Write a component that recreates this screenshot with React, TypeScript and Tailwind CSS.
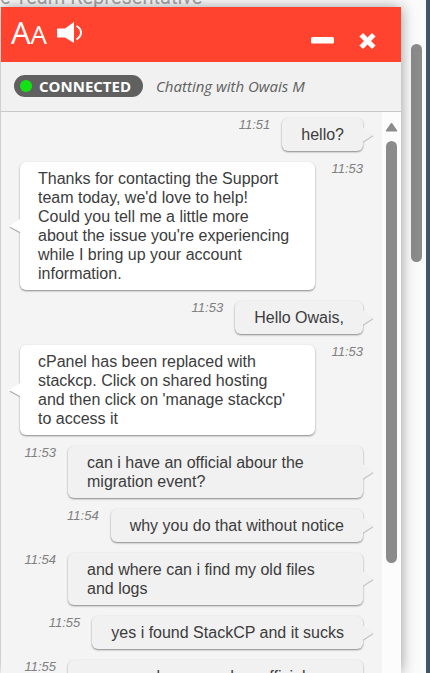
import React from "react";

type Message = { from: "agent" | "visitor"; time: string; text: string };

const messages: Message[] = [
  { from: "visitor", time: "11:51", text: "hello?" },
  {
    from: "agent",
    time: "11:53",
    text: "Thanks for contacting the Support team today, we'd love to help! Could you tell me a little more about the issue you're experiencing while I bring up your account information.",
  },
  { from: "visitor", time: "11:53", text: "Hello Owais," },
  {
    from: "agent",
    time: "11:53",
    text: "cPanel has been replaced with stackcp. Click on shared hosting and then click on 'manage stackcp' to access it",
  },
  { from: "visitor", time: "11:53", text: "can i have an official abour the migration event?" },
  { from: "visitor", time: "11:54", text: "why you do that without notice" },
  { from: "visitor", time: "11:54", text: "and where can i find my old files and logs" },
  { from: "visitor", time: "11:55", text: "yes i found StackCP and it sucks" },
  { from: "visitor", time: "11:55", text: "can you please send an official email" },
];

function MessageRow({ message }: { message: Message }) {
  const agent = message.from === "agent";
  return (
    <li className={agent ? "flex items-start gap-4" : "flex flex-row-reverse items-start gap-3"}>
      <div
        className={
          "relative rounded-md py-[7px] text-base leading-[19px] text-[#3c3c3c] shadow-[0_1px_2px_rgba(0,0,0,0.45)] " +
          (agent ? "max-w-[296px] bg-white pr-6 pl-[18px]" : "max-w-[295px] bg-[#f1f1f1] px-[19px]")
        }
      >
        {message.text}
        {agent ? (
          <svg className="absolute top-1/2 -left-3 -mt-2 h-4 w-4" viewBox="0 0 16 16" aria-hidden="true">
            <path d="M2 9 L12 14.500" stroke="#b0b0b0" strokeWidth="1.500" />
            <path d="M1 8 L12 1 H16 V14 H12 Z" fill="#fff" />
          </svg>
        ) : (
          <svg className="absolute top-1/2 -right-3 -mt-2 h-4 w-4" viewBox="0 0 16 16" aria-hidden="true">
            <path d="M14 8.500 L4 15" stroke="#c4c4c4" strokeWidth="1.500" />
            <path d="M15 7.500 L4 0.500 H0 V14.500 H4 Z" fill="#f1f1f1" />
          </svg>
        )}
      </div>
      <time className="shrink-0 text-[13px] leading-[14px] text-[#808080] italic">{message.time}</time>
    </li>
  );
}

export default function App() {
  return (
    <div className="flex h-screen overflow-hidden bg-[#fbfbfb] font-['Liberation_Sans',Arial,sans-serif]">
      <main className="relative flex min-w-0 flex-1 flex-col bg-white pt-[7px] pl-px">
        <h1 className="absolute top-[-15px] left-0 font-[Roboto,sans-serif] text-xl leading-6 whitespace-nowrap text-[#a8a8a8]">
          e Team Representative
        </h1>
        <section
          aria-label="Support chat"
          className="relative flex min-h-0 flex-1 flex-col bg-[#f4f4f4] shadow-[0_0_14px_rgba(0,0,0,0.4)]"
        >
          <header className="flex h-[55px] shrink-0 items-center bg-[#ff432e] pr-6 pb-1 pl-2.5 text-white">
            <button
              type="button"
              aria-label="Text size"
              className="flex items-baseline font-['Open_Sans',sans-serif] text-[31px] leading-[42px]"
            >
              A<span className="text-[26px]">A</span>
            </button>
            <button type="button" aria-label="Sound" className="ml-2.5">
              <svg width="28" height="24" viewBox="0 0 28 24" aria-hidden="true">
                <path d="M0 7.5 H8 L17 1 V22 L8 16.5 H0 Z" fill="#fff" />
                <path d="M19.5 5 C25.500 8.500 25.500 14.500 19.500 18.500" fill="none" stroke="#fff" strokeWidth="2" />
              </svg>
            </button>
            <div className="ml-auto flex items-center gap-6 pt-4">
              <button type="button" aria-label="Minimize">
                <svg width="24" height="18" viewBox="0 0 24 18" aria-hidden="true">
                  <rect x="0" y="5" width="23" height="6.500" rx="1.500" fill="#fff" />
                </svg>
              </button>
              <button type="button" aria-label="Close">
                <svg width="18" height="18" viewBox="0 0 18 18" aria-hidden="true">
                  <path
                    d="M4 1.500 L8.500 6 L13 1.500 L16 4.500 L11.500 9 L16 13.500 L13 16.500 L8.500 12 L4 16.500 L1 13.500 L5.500 9 L1 4.500 Z"
                    fill="#fff"
                    stroke="#fff"
                    strokeLinejoin="round"
                  />
                </svg>
              </button>
            </div>
          </header>

          <div className="flex h-[50px] shrink-0 items-center gap-[13px] border-b border-[#c8c8c8] bg-[#f1f1f1] pb-px pl-[13px] font-['Open_Sans',sans-serif] text-[15px] leading-[22px]">
            <span className="flex items-center gap-[7px] rounded-full bg-[#606060] pr-3 pl-1.5 font-bold text-white">
              <span className="size-3 rounded-full bg-[#12e212]" />
              CONNECTED
            </span>
            <span className="whitespace-nowrap text-[#606060] italic">Chatting with Owais M</span>
          </div>

          <div className="flex min-h-0 flex-1 overflow-hidden">
            <ul className="flex min-w-0 flex-1 flex-col gap-[11px] px-[19px] pt-1.5">
              {messages.map((message, i) => (
                <MessageRow key={i} message={message} />
              ))}
            </ul>
            <div aria-hidden="true" className="flex w-[19px] shrink-0 flex-col items-center bg-[#fcfcfc] pt-2.5">
              <svg width="13" height="10" viewBox="0 0 13 10">
                <path d="M6.500 1 L12 9 H1 Z" fill="#8b8b8b" stroke="#8b8b8b" strokeLinejoin="round" />
              </svg>
              <div className="mt-[9px] h-[422px] w-[11px] shrink-0 rounded-full bg-[#8b8b8b]" />
            </div>
          </div>
        </section>
      </main>
      <div aria-hidden="true" className="flex w-[25px] shrink-0 justify-center pt-11 pl-1.5">
        <div className="h-[218px] w-[11px] rounded-full bg-[#8b8b8b]" />
      </div>
      <div aria-hidden="true" className="w-1 shrink-0 bg-[#40566f]" />
    </div>
  );
}
